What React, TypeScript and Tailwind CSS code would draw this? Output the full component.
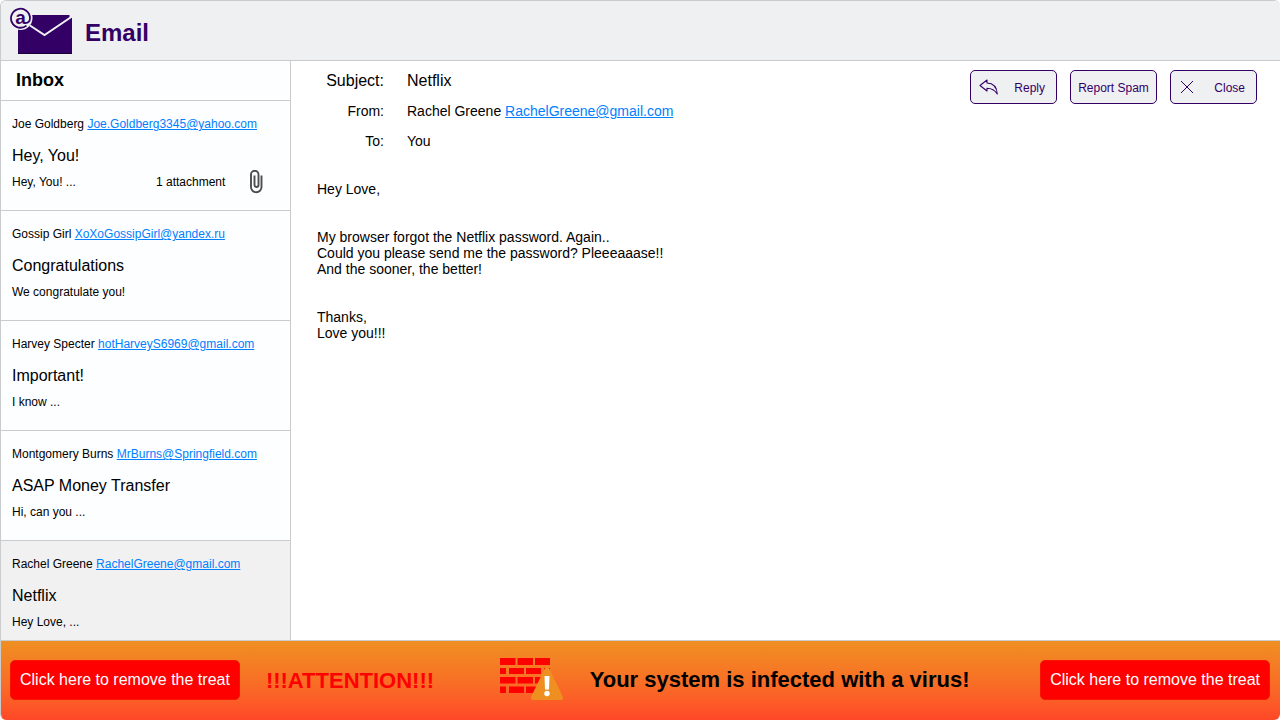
import React from "react";

type Mail = {
  name: string;
  email: string;
  subject: string;
  preview: string;
  attachment?: string;
  selected?: boolean;
};

const mails: Mail[] = [
  { name: "Joe Goldberg", email: "Joe.Goldberg3345@yahoo.com", subject: "Hey, You!", preview: "Hey, You! ...", attachment: "1 attachment" },
  { name: "Gossip Girl", email: "XoXoGossipGirl@yandex.ru", subject: "Congratulations", preview: "We congratulate you!" },
  { name: "Harvey Specter", email: "hotHarveyS6969@gmail.com", subject: "Important!", preview: "I know ..." },
  { name: "Montgomery Burns", email: "MrBurns@Springfield.com", subject: "ASAP Money Transfer", preview: "Hi, can you ..." },
  { name: "Rachel Greene", email: "RachelGreene@gmail.com", subject: "Netflix", preview: "Hey Love, ...", selected: true },
];

function MailLogo() {
  return (
    <svg width="64" height="48" viewBox="0 0 64 48" aria-hidden="true">
      <rect x="8" y="8" width="54" height="39" fill="#330066" />
      <path d="M20 18.500L34.500 28L62 9.500" fill="none" stroke="#eff0f2" strokeWidth="2" />
      <path d="M59.500 7.500H62.500V10.500L59.500 10Z" fill="#eff0f2" />
      <path d="M8 46.500H62" stroke="#1c0038" strokeWidth="1" />
      <circle cx="10.500" cy="11" r="12" fill="#eff0f2" />
      <path d="M16.500 18.600A9.500 9.500 0 1 1 20 11C20 14.500 18 16.500 15 15.800" fill="none" stroke="#330066" strokeWidth="1.800" />
      <text x="10.500" y="16.500" textAnchor="middle" fontSize="19" fontWeight="700" fill="#330066">a</text>
    </svg>
  );
}

function Paperclip() {
  return (
    <svg width="14" height="24" viewBox="0 0 14 24" fill="none" stroke="#4d4d4d" strokeWidth="1.900" aria-hidden="true">
      <path d="M12.500 5.500V17A5.250 5.250 0 0 1 2 17V4.500A3.750 3.750 0 0 1 9.500 4.500V15A2 2 0 0 1 5.500 15V5.500" />
    </svg>
  );
}

function ReplyIcon() {
  return (
    <svg width="20" height="16" viewBox="0 1 20 16" fill="none" stroke="#330066" strokeWidth="1.100" strokeLinejoin="round" aria-hidden="true" className="overflow-visible">
      <path d="M1 6.500L8 1V4C14 4.200 17.800 8 18.300 15C15.800 11 12.500 9.200 8 9.200V12Z" />
    </svg>
  );
}

function CloseIcon() {
  return (
    <svg width="14" height="14" viewBox="0 1 14 14" stroke="#330066" strokeWidth="1" aria-hidden="true" className="overflow-visible">
      <path d="M1 1L13 13M13 1L1 13" />
    </svg>
  );
}

function Firewall() {
  return (
    <svg width="64" height="44" viewBox="0 1 64 44" aria-hidden="true">
      <path
        d="M0 1H15.500V8H0ZM17.500 1H33V8H17.500ZM35 1H50V8H35ZM0 11H6V17H0ZM9 11H24V17H9ZM26 11H41V17H26ZM44 11H50V17H44ZM0 20H15.500V26.500H0ZM17.500 20H33V26.500H17.500ZM35 20H50V26.500H35ZM0 29.500H6V36H0ZM9 29.500H24V36H9ZM26 29.500H41V36H26Z"
        fill="#f00"
      />
      <path d="M44.500 12Q47 8 49.500 12L62.500 39Q64 43 60.500 43H33.500Q30 43 31.500 39Z" fill="#ef8f22" />
      <path d="M44.500 19H49.500L49 32.500H45Z" fill="#fff" />
      <circle cx="47" cy="36.500" r="2.700" fill="#fff" />
    </svg>
  );
}

function MailItem({ mail }: { mail: Mail }) {
  return (
    <li className={`h-[110px] shrink-0 border-b border-[#cacbcd] px-[11px] pt-[15px] ${mail.selected ? "bg-[#f1f1f1]" : "bg-[#fdfeff]"}`}>
      <div className="text-xs">
        {mail.name} <a href={`mailto:${mail.email}`} className="text-[#0080ff] underline">{mail.email}</a>
      </div>
      <h2 className="mt-3 text-base leading-6">{mail.subject}</h2>
      <div className="flex h-7 items-center text-xs">
        <span className="w-36">{mail.preview}</span>
        {mail.attachment && (
          <>
            <span className="w-[93px]">{mail.attachment}</span>
            <Paperclip />
          </>
        )}
      </div>
    </li>
  );
}

const actionClass = "flex h-[34px] w-[87px] items-center rounded-[5px] border border-[#330066] bg-[#eff0f2] pt-px text-xs text-[#330066]";
const removeClass = "h-10 rounded-[5px] border border-[#f81400] bg-[#ff0000] px-[9px] text-base text-white";

export default function App() {
  return (
    <div className="flex h-screen flex-col overflow-hidden rounded-md border-t border-l border-[#cacbcd] bg-white font-['Liberation_Sans',Arial,sans-serif] text-black">
      <header className="flex h-[60px] shrink-0 items-center gap-[11px] border-b border-[#cacbcd] bg-[#eff0f2] pl-[9px]">
        <MailLogo />
        <h1 className="pt-1 text-2xl font-bold text-[#330066]">Email</h1>
      </header>

      <div className="flex min-h-0 flex-1">
        <nav aria-label="Inbox" className="flex w-[290px] shrink-0 flex-col overflow-hidden border-r border-[#cacbcd] bg-[#fdfeff]">
          <h2 className="h-10 shrink-0 border-b border-[#cacbcd] pl-[15px] text-lg leading-[38px] font-bold">Inbox</h2>
          <ul className="flex min-h-0 flex-1 flex-col overflow-hidden">
            {mails.map((mail) => (
              <MailItem key={mail.email} mail={mail} />
            ))}
          </ul>
        </nav>

        <main className="flex-1 overflow-hidden pr-[23px] pl-[26px]">
          <div className="flex items-start justify-between">
            <dl className="grid grid-cols-[67px_auto] gap-x-[23px] pt-[5px] text-sm leading-[30px]">
              <dt className="text-right text-base leading-[30px]">Subject:</dt>
              <dd className="text-base leading-[30px]">Netflix</dd>
              <dt className="text-right">From:</dt>
              <dd>
                Rachel Greene <a href="mailto:RachelGreene@gmail.com" className="text-[#0080ff] underline">RachelGreene@gmail.com</a>
              </dd>
              <dt className="text-right">To:</dt>
              <dd>You</dd>
            </dl>
            <div className="flex gap-[13px] pt-[9px]">
              <button type="button" className={`${actionClass} justify-between pr-[11px] pl-2`}>
                <ReplyIcon />
                Reply
              </button>
              <button type="button" className={`${actionClass} justify-center`}>Report Spam</button>
              <button type="button" className={`${actionClass} justify-between pr-[11px] pl-[9px]`}>
                <CloseIcon />
                Close
              </button>
            </div>
          </div>
          <article className="mt-[25px] text-sm leading-4 whitespace-pre-line">
            {"Hey Love,\n\n\nMy browser forgot the Netflix password. Again..\nCould you please send me the password? Pleeeaaase!!\nAnd the sooner, the better!\n\n\nThanks,\nLove you!!!"}
          </article>
        </main>
      </div>

      <aside className="flex h-20 shrink-0 items-center border-t border-[#cacbcd] bg-linear-to-b from-[#ef8f22] to-[#ff4728] pr-[10px] pb-0.5 pl-[9px]">
        <button type="button" className={removeClass}>Click here to remove the treat</button>
        <strong className="ml-[26px] pt-0.5 text-[22px] text-[#ff0000]">!!!ATTENTION!!!</strong>
        <div className="flex flex-1 items-center justify-center gap-[26px] pr-[5px]">
          <Firewall />
          <strong className="text-[22px]">Your system is infected with a virus!</strong>
        </div>
        <button type="button" className={removeClass}>Click here to remove the treat</button>
      </aside>
    </div>
  );
}
